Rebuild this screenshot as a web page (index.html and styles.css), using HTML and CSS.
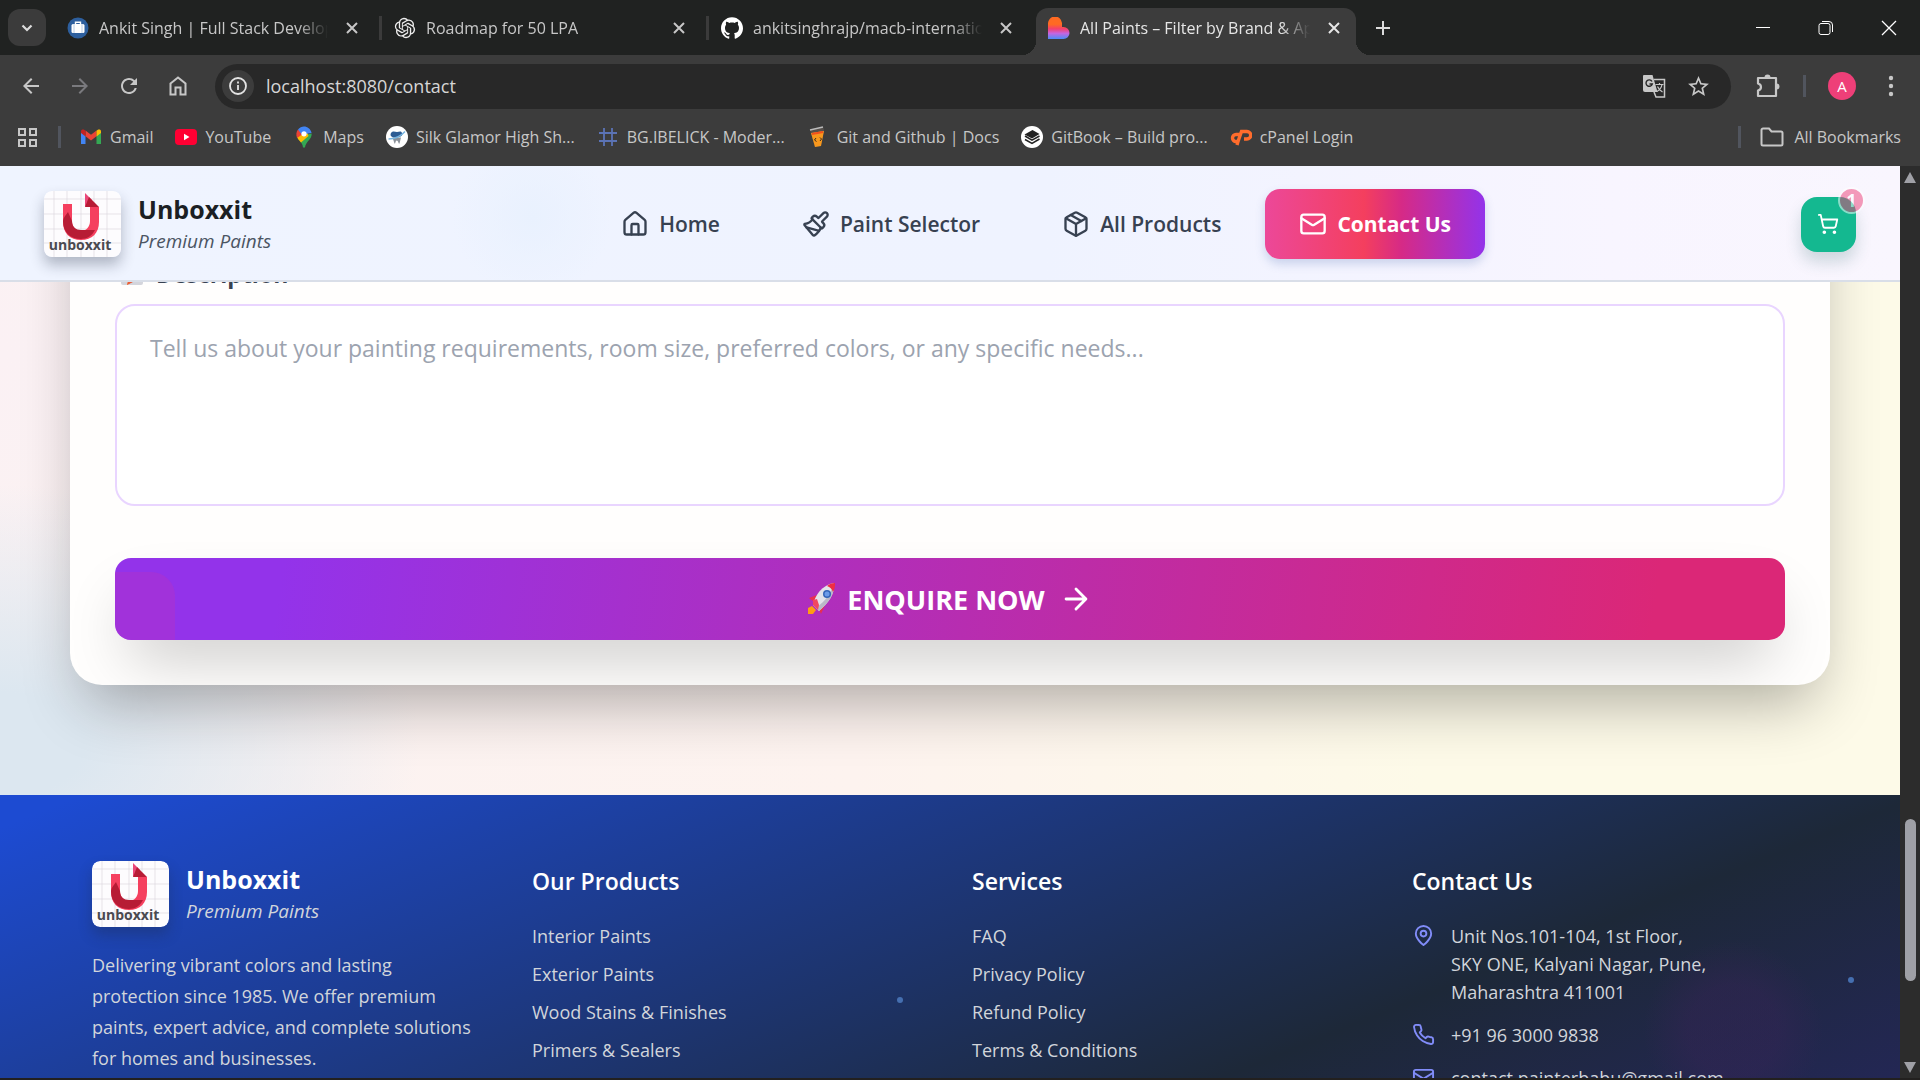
FILE: index.html
```html
<!DOCTYPE html>
<html lang="en">
<head>
  <meta charset="UTF-8" />
  <meta name="viewport" content="width=device-width, initial-scale=1.0" />
  <title>All Paints – Filter by Brand &amp; Application</title>
  <link rel="stylesheet" href="styles.css">
</head>
<body>
  <div class="tab-strip">
    <button class="tab-search" aria-label="Search tabs">
      <svg width="16" height="16" viewBox="0 0 16 16"><path d="M3.500 5.500 8 10l4.500-4.500" fill="none" stroke="currentColor" stroke-width="2.200"/></svg>
    </button>
    <div class="tab">
      <svg class="fav" viewBox="0 0 22 22"><circle cx="11" cy="11" r="10.500" fill="#2d5f9e"/><path d="M8.500 7V5.200h5V7" fill="none" stroke="#fff" stroke-width="1.400"/><rect x="4.500" y="7" width="13" height="9" rx="1.500" fill="#fff"/><path d="M7 7v9M15 7v9" stroke="#b8cce6"/></svg>
      <span class="tab-title">Ankit Singh | Full Stack Developer</span>
      <button class="tab-close" aria-label="Close tab"><svg width="14" height="14" viewBox="0 0 14 14"><path d="m2 2 10 10M12 2 2 12" stroke="currentColor" stroke-width="2"/></svg></button>
    </div>
    <div class="tab">
      <svg class="fav" viewBox="-1 -1 26 26"><path fill="#eee" d="M22.2819 9.8211a5.9847 5.9847 0 0 0-.5157-4.9108 6.0462 6.0462 0 0 0-6.5098-2.9A6.0651 6.0651 0 0 0 4.9807 4.1818a5.9847 5.9847 0 0 0-3.9977 2.9 6.0462 6.0462 0 0 0 .7427 7.0966 5.98 5.98 0 0 0 .511 4.9107 6.051 6.051 0 0 0 6.5146 2.9001A5.9847 5.9847 0 0 0 13.2599 24a6.0557 6.0557 0 0 0 5.7718-4.2058 5.9894 5.9894 0 0 0 3.9977-2.9001 6.0557 6.0557 0 0 0-.7475-7.0729zm-9.022 12.6081a4.4755 4.4755 0 0 1-2.8764-1.0408l.1419-.0804 4.7783-2.7582a.7948.7948 0 0 0 .3927-.6813v-6.7369l2.02 1.1686a.071.071 0 0 1 .038.052v5.5826a4.504 4.504 0 0 1-4.4945 4.4944zm-9.6607-4.1254a4.4708 4.4708 0 0 1-.5346-3.0137l.142.0852 4.783 2.7582a.7712.7712 0 0 0 .7806 0l5.8428-3.3685v2.3324a.0804.0804 0 0 1-.0332.0615L9.74 19.9502a4.4992 4.4992 0 0 1-6.1408-1.6464zM2.3408 7.8956a4.485 4.485 0 0 1 2.3655-1.9728V11.6a.7664.7664 0 0 0 .3879.6765l5.8144 3.3543-2.0201 1.1685a.0757.0757 0 0 1-.071 0l-4.8303-2.7865A4.504 4.504 0 0 1 2.3408 7.872zm16.5963 3.8558L13.1038 8.364 15.1192 7.2a.0757.0757 0 0 1 .071 0l4.8303 2.7913a4.4944 4.4944 0 0 1-.6765 8.1042v-5.6772a.79.79 0 0 0-.407-.667zm2.0107-3.0231l-.142-.0852-4.7735-2.7818a.7759.7759 0 0 0-.7854 0L9.409 9.2297V6.8974a.0662.0662 0 0 1 .0284-.0615l4.8303-2.7866a4.4992 4.4992 0 0 1 6.6802 4.66zM8.3065 12.863l-2.02-1.1638a.0804.0804 0 0 1-.038-.0567V6.0742a4.4992 4.4992 0 0 1 7.3757-3.4537l-.142.0805L8.704 5.459a.7948.7948 0 0 0-.3927.6813zm1.0976-2.3654l2.602-1.4998 2.6069 1.4998v2.9994l-2.5974 1.4997-2.6067-1.4997Z"/></svg>
      <span class="tab-title">Roadmap for 50 LPA</span>
      <button class="tab-close" aria-label="Close tab"><svg width="14" height="14" viewBox="0 0 14 14"><path d="m2 2 10 10M12 2 2 12" stroke="currentColor" stroke-width="2"/></svg></button>
    </div>
    <div class="tab tab-last">
      <svg class="fav" viewBox="0 0 24 24"><path fill="#fff" d="M12 .297c-6.63 0-12 5.373-12 12 0 5.303 3.438 9.8 8.205 11.385.6.113.82-.258.82-.577 0-.285-.01-1.04-.015-2.04-3.338.724-4.042-1.61-4.042-1.61C4.422 18.07 3.633 17.7 3.633 17.7c-1.087-.744.084-.729.084-.729 1.205.084 1.838 1.236 1.838 1.236 1.07 1.835 2.809 1.305 3.495.998.108-.776.417-1.305.76-1.605-2.665-.3-5.466-1.332-5.466-5.93 0-1.31.465-2.38 1.235-3.22-.135-.303-.54-1.523.105-3.176 0 0 1.005-.322 3.3 1.23.96-.267 1.98-.399 3-.405 1.02.006 2.04.138 3 .405 2.28-1.552 3.285-1.23 3.285-1.23.645 1.653.24 2.873.12 3.176.765.84 1.23 1.91 1.23 3.22 0 4.61-2.805 5.625-5.475 5.92.42.36.81 1.096.81 2.22 0 1.606-.015 2.896-.015 3.286 0 .315.21.69.825.57C20.565 22.092 24 17.592 24 12.297c0-6.627-5.373-12-12-12"/></svg>
      <span class="tab-title">ankitsinghrajp/macb-international</span>
      <button class="tab-close" aria-label="Close tab"><svg width="14" height="14" viewBox="0 0 14 14"><path d="m2 2 10 10M12 2 2 12" stroke="currentColor" stroke-width="2"/></svg></button>
    </div>
    <div class="tab tab-active">
      <svg class="fav" viewBox="0 0 22 22"><defs><linearGradient id="heart" x1="0" y1="0" x2="0" y2="1"><stop offset="0.350" stop-color="#ff6a22"/><stop offset="0.550" stop-color="#f43f6e"/><stop offset="0.750" stop-color="#c565e0"/><stop offset="1" stop-color="#4a8df8"/></linearGradient></defs><path fill="url(#heart)" d="M0 22V7a7 7 0 0 1 14-1v4h1.500a6 6 0 0 1 0 12z"/></svg>
      <span class="tab-title">All Paints – Filter by Brand &amp; Application</span>
      <button class="tab-close" aria-label="Close tab"><svg width="14" height="14" viewBox="0 0 14 14"><path d="m2 2 10 10M12 2 2 12" stroke="currentColor" stroke-width="2"/></svg></button>
    </div>
    <button class="new-tab" aria-label="New tab"><svg width="16" height="16" viewBox="0 0 16 16"><path d="M8 1v14M1 8h14" stroke="currentColor" stroke-width="2"/></svg></button>
    <div class="window-controls">
      <button aria-label="Minimize"><svg width="16" height="16" viewBox="0 0 16 16"><path d="M1 7.500h14" stroke="currentColor"/></svg></button>
      <button aria-label="Restore"><svg width="16" height="16" viewBox="0 0 16 16" fill="none" stroke="currentColor"><rect x="1" y="3.500" width="11" height="11" rx="2"/><path d="M4 1.500h7a3.500 3.500 0 0 1 3.500 3.500v7"/></svg></button>
      <button aria-label="Close"><svg width="16" height="16" viewBox="0 0 16 16"><path d="m1 1 14 14M15 1 1 15" stroke="currentColor" stroke-width="1.300"/></svg></button>
    </div>
  </div>

  <div class="toolbar">
    <button class="tool" aria-label="Back"><svg class="icon-24" viewBox="0 0 24 24"><path fill="currentColor" d="M20 11H7.830l5.590-5.590L12 4l-8 8 8 8 1.410-1.410L7.830 13H20z"/></svg></button>
    <button class="tool tool-off" aria-label="Forward"><svg class="icon-24" viewBox="0 0 24 24"><path fill="currentColor" d="M4 11h12.170l-5.590-5.590L12 4l8 8-8 8-1.410-1.410L16.170 13H4z"/></svg></button>
    <button class="tool" aria-label="Reload"><svg class="icon-24" viewBox="0 0 24 24"><path fill="currentColor" d="M17.650 6.350A7.958 7.958 0 0 0 12 4c-4.420 0-7.990 3.580-7.990 8s3.570 8 7.990 8c3.730 0 6.840-2.550 7.730-6h-2.080A5.990 5.990 0 0 1 12 18c-3.310 0-6-2.690-6-6s2.690-6 6-6c1.660 0 3.140.690 4.220 1.780L13 11h7V4z"/></svg></button>
    <button class="tool" aria-label="Home"><svg class="icon-24" viewBox="0 0 24 24"><path fill="none" stroke="currentColor" stroke-width="2" d="M4.500 9.500 12 3.500l7.500 6v11h-5v-7h-5v7h-5z"/></svg></button>
    <div class="address">
      <button class="site-info" aria-label="Site information"><svg width="20" height="20" viewBox="0 0 20 20"><circle cx="10" cy="10" r="8" fill="none" stroke="currentColor" stroke-width="1.800"/><path d="M10 9v5M10 5.500v2" stroke="currentColor" stroke-width="1.800"/></svg></button>
      <input type="text" class="url" aria-label="Address" value="localhost:8080/contact">
      <button class="tool-small" aria-label="Translate"><svg width="24" height="24" viewBox="0 0 24 24"><path fill="#c7c7c7" d="M2 1h8.500l5 17H3a2 2 0 0 1-2-2V2a1 1 0 0 1 1-1z"/><path fill="none" stroke="#c7c7c7" stroke-width="1.500" d="M12 5.500h10.500V23H14l-2-5"/><path d="M10 7.500A3.200 3.200 0 1 0 10.300 10H7.500" fill="none" stroke="#282828" stroke-width="1.400"/><path d="M13.500 10.500h8M17.500 9v1.500M20 10.500c-.500 3-2.500 5.500-5 7M15.500 12.500c1 2.500 2.500 4 5 5.500" fill="none" stroke="#c7c7c7" stroke-width="1.200"/></svg></button>
      <button class="tool-small" aria-label="Bookmark this tab"><svg width="25" height="25" viewBox="0 0 24 24"><path fill="#c7c7c7" d="M22 9.240l-7.190-.620L12 2 9.190 8.630 2 9.240l5.460 4.730L5.820 21 12 17.270 18.180 21l-1.630-7.030zM12 15.400l-3.760 2.270 1-4.280-3.320-2.880 4.380-.380L12 6.100l1.710 4.040 4.380.380-3.320 2.880 1 4.280z"/></svg></button>
    </div>
    <button class="tool-ext" aria-label="Extensions"><svg width="26" height="26" viewBox="0 0 26 26"><path fill="none" stroke="currentColor" stroke-width="2.200" stroke-linejoin="round" d="M3 5h18v18H3v-5.500c4-1 4-6 0-7z"/><path fill="currentColor" d="M9.500 4.500a3 3 0 0 1 6 0zM21.500 10.500a3 3 0 0 1 0 6z"/></svg></button>
    <span class="divider"></span>
    <button class="avatar" aria-label="Profile">A</button>
    <button class="tool-menu" aria-label="Menu"><svg width="6" height="22" viewBox="0 0 6 22"><g fill="currentColor"><circle cx="3" cy="3" r="2.200"/><circle cx="3" cy="11" r="2.200"/><circle cx="3" cy="19" r="2.200"/></g></svg></button>
  </div>

  <div class="bookmarks">
    <button class="apps" aria-label="Apps"><svg width="21" height="21" viewBox="0 0 21 21"><g fill="none" stroke="currentColor" stroke-width="2"><path d="M2 2h6v6H2zM13 2h6v6h-6zM2 13h6v6H2zM13 13h6v6h-6z"/></g></svg></button>
    <span class="divider"></span>
    <a href="#"><svg class="mark" viewBox="0 0 22 22"><path fill="#4285f4" d="M1 6v12h4.500V9.500z"/><path fill="#34a853" d="M21 6v12h-4.500V9.500z"/><path fill="#ea4335" d="M5.500 4.500 11 8.700l5.500-4.200v5.800L11 14.500l-5.500-4.200z"/><path fill="#c5221f" d="M1 7V5.500c0-2 2-2.500 3.500-1.500l1 .700v5.700z"/><path fill="#fbbc04" d="M21 7V5.500c0-2-2-2.500-3.500-1.500l-1 .700v5.700z"/></svg>Gmail</a>
    <a href="#"><svg class="mark" viewBox="0 0 22 22"><rect y="3" width="22" height="16" rx="4" fill="#ff0033"/><path fill="#fff" d="m9 7.800 5.500 3.200L9 14.200z"/></svg>YouTube</a>
    <a href="#"><svg class="mark" viewBox="0 0 22 22"><path fill="#34a853" d="M4 10.500c1.500 4 5.500 5.500 6 11h2c.500-6 7-8 6.700-14z"/><path fill="#fbbc04" d="M3.800 9.500 14 5l1.500 5-7.500 6.500C6 14 4 12.500 3.800 9.500z"/><path fill="#ea4335" d="M5 3.500 10 8l-6 4C3 8.500 3 6 5 3.500z"/><path fill="#4285f4" d="M5 3.500c4-5 12-3.500 13.600 3.500L12 8l-3 1z"/><circle cx="11" cy="7.800" r="2.600" fill="#fff"/></svg>Maps</a>
    <a href="#"><svg class="mark" viewBox="0 0 22 22"><circle cx="11" cy="11" r="11" fill="#fff"/><path fill="#2d5c94" d="M5 7c2-2.500 4-1 6-1s4-1.500 5 1-1 4-5.500 4.500S3.500 10 5 7z"/><path fill="#8b9199" d="M6.500 11.500h8.500l-1.500 6c-1 1-1.200-3-2.700-3s-1.300 4-2.300 3z"/><path d="M2.500 13C9 13 15 10 19 5.500" fill="none" stroke="#77b4df" stroke-width="1.500"/></svg>Silk Glamor High Sh...</a>
    <a href="#"><svg class="mark" viewBox="0 0 22 22"><path d="M7 2v18M15 2v18M2 7h18M2 15h18" stroke="#5b73b5" stroke-width="1.800"/></svg>BG.IBELICK - Moder...</a>
    <a href="#"><svg class="mark" viewBox="0 0 22 22"><path d="m3 4 13-3 1 3-3 16-6 1z" fill="#55504c"/><path d="m4 7 13-2-3 15-6 1z" fill="#f8981d"/><path d="m3 4 13-3" stroke="#bbb" stroke-width="1.500"/><path d="m5 8 11-2" stroke="#f4511e" stroke-width="2"/><path d="m9 12-1.500 2 2 1.500M13 11.500l1.500 1.500-1.500 2" fill="none" stroke="#3b2a1a"/></svg>Git and Github | Docs</a>
    <a href="#"><svg class="mark" viewBox="0 0 22 22"><circle cx="11" cy="11" r="11" fill="#fff"/><path fill="#222" d="m3.500 8.500 8-4.500 7 4-7.500 4.500z"/><path d="m4 10 7 4.200L18.500 10M4 13.500l7 4 7.500-4.500" fill="none" stroke="#222" stroke-width="1.500"/></svg>GitBook – Build pro...</a>
    <a href="#"><svg class="mark" viewBox="0 0 22 22"><path d="M9.500 8.500H6a3.500 3.500 0 0 0 0 7h2L11.500 5.500H17a3.700 3.700 0 0 1 0 7.500h-3M7 19l1-3.500" fill="none" stroke="#ff6c2c" stroke-width="3.400"/></svg>cPanel Login</a>
    <div class="all-bookmarks">
      <span class="divider"></span>
      <a href="#"><svg width="24" height="20" viewBox="0 0 24 20"><path d="M1.500 3a1.500 1.500 0 0 1 1.500-1.500h6l2.500 3H21A1.500 1.500 0 0 1 22.500 6v11a1.500 1.500 0 0 1-1.500 1.500H3A1.500 1.500 0 0 1 1.500 17z" fill="none" stroke="currentColor" stroke-width="2"/></svg>All Bookmarks</a>
    </div>
  </div>

  <div class="viewport">
    <div class="page">
      <header class="site-header">
        <a href="#" class="brand">
          <svg class="logo" viewBox="0 0 77 66">
            <rect width="77" height="66" rx="8" fill="#fdfcfe"/>
            <path d="M10 0v66M23 0v66M37 0v66M50 0v66M63 0v66M0 8h77M0 23h77M0 38h77M0 52h77" stroke="#ddd9df" stroke-width="0.700"/>
            <path fill="#f5405f" d="M19 13h9v17c0 6 4 10 9 10s9-4 9-10V16h9v15c0 11-7 18-18 18S19 42 19 31z"/>
            <path fill="#b71c35" d="M19 30c0-3 3-6 5-9l4 9c0 6 4 9 9 9h14c-3 6-8 9-14 9-11 0-18-7-18-18z"/>
            <path fill="#ea4778" d="m41 2 7 7-7 7z"/><path fill="#b71c35" d="m41 16 4-10 10 10z"/>
            <text class="logo-text" x="36" y="59">unboxxit</text>
          </svg>
          <span class="brand-text"><strong>Unboxxit</strong><em>Premium Paints</em></span>
        </a>
        <nav class="site-nav">
          <a href="#"><svg class="line-icon" viewBox="0 0 24 24"><path d="M15 21v-8a1 1 0 0 0-1-1h-4a1 1 0 0 0-1 1v8"/><path d="M3 10a2 2 0 0 1 .709-1.528l7-5.999a2 2 0 0 1 2.582 0l7 5.999A2 2 0 0 1 21 10v9a2 2 0 0 1-2 2H5a2 2 0 0 1-2-2z"/></svg>Home</a>
          <a href="#"><svg class="line-icon" viewBox="0 0 24 24"><path d="m14.622 17.897-10.680-2.913"/><path d="M18.376 2.622a1 1 0 1 1 3.002 3.002L17.360 9.643a.5.5 0 0 0 0 .707l.944.944a2.410 2.410 0 0 1 0 3.408l-.944.944a.5.5 0 0 1-.707 0L8.354 7.348a.5.5 0 0 1 0-.707l.944-.944a2.410 2.410 0 0 1 3.408 0l.944.944a.5.5 0 0 0 .707 0z"/><path d="M9 8c-1.804 2.710-3.970 3.460-6.583 3.948a.507.507 0 0 0-.302.819l7.320 8.883a1 1 0 0 0 1.185.204C12.735 20.405 16 16.792 16 15"/></svg>Paint Selector</a>
          <a href="#"><svg class="line-icon" viewBox="0 0 24 24"><path d="m7.500 4.270 9 5.150"/><path d="M21 8a2 2 0 0 0-1-1.730l-7-4a2 2 0 0 0-2 0l-7 4A2 2 0 0 0 3 8v8a2 2 0 0 0 1 1.730l7 4a2 2 0 0 0 2 0l7-4A2 2 0 0 0 21 16Z"/><path d="m3.300 7 8.700 5 8.700-5M12 22V12"/></svg>All Products</a>
          <a href="#" class="current"><svg class="line-icon" viewBox="0 0 24 24"><rect x="2" y="4" width="20" height="16" rx="2"/><path d="m22 7-8.970 5.700a1.940 1.940 0 0 1-2.060 0L2 7"/></svg>Contact Us</a>
        </nav>
        <button class="cart" aria-label="Cart">
          <svg class="cart-icon" viewBox="0 0 24 24"><circle cx="8" cy="21" r="1"/><circle cx="19" cy="21" r="1"/><path d="M2.050 2.050h2l2.660 12.420a2 2 0 0 0 2 1.580h9.780a2 2 0 0 0 1.950-1.570l1.650-7.430H5.120"/></svg>
          <span class="cart-count">1</span>
        </button>
      </header>

      <main class="contact">
        <form class="contact-card">
          <label for="description"><svg width="24" height="24" viewBox="0 0 24 24"><rect x="1" y="1" width="22" height="22" rx="2" fill="#d4d5dc"/><path d="M5 6h13M5 10h10" stroke="#8990a5"/><path d="m7 23 2-7L18 5l4 4-10 11z" fill="#ff9d26"/><path d="m7 23 2-7 4 4z" fill="#e85b3b"/></svg>Description</label>
          <textarea id="description" placeholder="Tell us about your painting requirements, room size, preferred colors, or any specific needs..."></textarea>
          <button type="submit" class="enquire">
            <svg width="30" height="34" viewBox="0 0 30 34"><path fill="#e8304f" d="m2 16 8-3 8 10-4 9-3-7-5-6z"/><path fill="#ff9d13" d="M1 32v-6l4-2 4 4-3 4z"/><path fill="#e3e3ea" d="M6 23C8 13 15 3 27 1c1 12-6 20-15 28z"/><path fill="#b9b9c7" d="M12 29 9 26C18 19 24 12 27 1c1 12-6 20-15 28z"/><path fill="#ef2d45" d="M20 4c2-2 5-3 8-3 0 3 0 6-2 9-1-3-3-5-6-6z"/><circle cx="20" cy="12" r="4" fill="#3565b8"/><circle cx="20" cy="12" r="2.500" fill="#6b9be8"/><path fill="#f04860" d="m6 18 4-1 2 6-1 5-5-5z"/></svg>
            ENQUIRE NOW
            <svg class="line-icon arrow" viewBox="0 0 24 24"><path d="M5 12h14M12 5l7 7-7 7"/></svg>
          </button>
        </form>
      </main>

      <footer class="site-footer">
        <span class="spark spark-left"></span>
        <span class="spark spark-right"></span>
        <div class="footer-col">
          <a href="#" class="brand">
            <svg class="logo" viewBox="0 0 77 66">
              <rect width="77" height="66" rx="8" fill="#fdfcfe"/>
              <path d="M10 0v66M23 0v66M37 0v66M50 0v66M63 0v66M0 8h77M0 23h77M0 38h77M0 52h77" stroke="#ddd9df" stroke-width="0.700"/>
              <path fill="#f5405f" d="M19 13h9v17c0 6 4 10 9 10s9-4 9-10V16h9v15c0 11-7 18-18 18S19 42 19 31z"/>
              <path fill="#b71c35" d="M19 30c0-3 3-6 5-9l4 9c0 6 4 9 9 9h14c-3 6-8 9-14 9-11 0-18-7-18-18z"/>
              <path fill="#ea4778" d="m41 2 7 7-7 7z"/><path fill="#b71c35" d="m41 16 4-10 10 10z"/>
              <text class="logo-text" x="36" y="59">unboxxit</text>
            </svg>
            <span class="brand-text"><strong>Unboxxit</strong><em>Premium Paints</em></span>
          </a>
          <p>Delivering vibrant colors and lasting protection since 1985. We offer premium paints, expert advice, and complete solutions for homes and businesses.</p>
        </div>
        <div class="footer-col">
          <h3>Our Products</h3>
          <ul>
            <li><a href="#">Interior Paints</a></li>
            <li><a href="#">Exterior Paints</a></li>
            <li><a href="#">Wood Stains &amp; Finishes</a></li>
            <li><a href="#">Primers &amp; Sealers</a></li>
          </ul>
        </div>
        <div class="footer-col">
          <h3>Services</h3>
          <ul>
            <li><a href="#">FAQ</a></li>
            <li><a href="#">Privacy Policy</a></li>
            <li><a href="#">Refund Policy</a></li>
            <li><a href="#">Terms &amp; Conditions</a></li>
          </ul>
        </div>
        <div class="footer-col">
          <h3>Contact Us</h3>
          <address>
            <div class="contact-row"><svg class="line-icon" viewBox="0 0 24 24"><path d="M20 10c0 6-8 12-8 12s-8-6-8-12a8 8 0 0 1 16 0Z"/><circle cx="12" cy="10" r="3"/></svg><span>Unit Nos.101-104, 1st Floor,<br>SKY ONE, Kalyani Nagar, Pune,<br>Maharashtra 411001</span></div>
            <div class="contact-row"><svg class="line-icon" viewBox="0 0 24 24"><path d="M22 16.920v3a2 2 0 0 1-2.180 2 19.790 19.790 0 0 1-8.630-3.070 19.500 19.500 0 0 1-6-6 19.790 19.790 0 0 1-3.070-8.670A2 2 0 0 1 4.110 2h3a2 2 0 0 1 2 1.720 12.840 12.840 0 0 0 .700 2.810 2 2 0 0 1-.450 2.110L8.090 9.910a16 16 0 0 0 6 6l1.270-1.270a2 2 0 0 1 2.110-.450 12.840 12.840 0 0 0 2.810.700A2 2 0 0 1 22 16.920z"/></svg><span>+91 96 3000 9838</span></div>
            <div class="contact-row"><svg class="line-icon" viewBox="0 0 24 24"><rect x="2" y="4" width="20" height="16" rx="2"/><path d="m22 7-8.970 5.700a1.940 1.940 0 0 1-2.060 0L2 7"/></svg><span>contact.painterbabu@gmail.com</span></div>
          </address>
        </div>
      </footer>
    </div>
    <div class="scrollbar">
      <span class="scroll-arrow"></span>
      <span class="scroll-before"></span>
      <span class="scroll-thumb"></span>
      <span class="scroll-after"></span>
      <span class="scroll-arrow scroll-down"></span>
    </div>
  </div>
</body>
</html>
```
FILE: styles.css
```css
* {
  box-sizing: border-box;
}
body {
  margin: 0;
  height: 100vh;
  display: flex;
  flex-direction: column;
  overflow: hidden;
  background: #3c3c3c;
  border-bottom: 2px solid #22201f;
  font-family: 'Open Sans', 'Noto Sans', sans-serif;
}
button, input, textarea {
  font-family: inherit;
}
button {
  display: flex;
  align-items: center;
  justify-content: center;
  padding: 0;
  border: none;
  background: none;
  color: inherit;
  cursor: pointer;
}
a {
  color: inherit;
  text-decoration: none;
}
svg {
  display: block;
  flex: none;
}

/* tab strip */
.tab-strip, .bookmarks {
  font-size: 16px;
}
.tab-strip {
  flex: none;
  display: flex;
  align-items: center;
  height: 55px;
  padding-left: 8px;
  background: #202221;
  color: #dcdcdc;
}
.tab-search {
  width: 38px;
  height: 37px;
  margin-right: 9px;
  border-radius: 12px;
  background: #3b3b3b;
}
.tab {
  display: flex;
  align-items: center;
  width: 327px;
  height: 24px;
  padding: 0 20px 0 12px;
  border-right: 3px solid #3b3b3b;
  color: #c7c7c7;
}
.tab-last {
  border-color: transparent;
}
.fav {
  width: 22px;
  height: 22px;
  margin-right: 10px;
}
.tab-title {
  flex: 1;
  overflow: hidden;
  white-space: nowrap;
  -webkit-mask-image: linear-gradient(to left, transparent, #000 30px);
  mask-image: linear-gradient(to left, transparent, #000 30px);
}
.tab-close {
  width: 14px;
  margin-left: 17px;
}
.tab-active {
  position: relative;
  align-self: flex-end;
  width: 320px;
  height: 47px;
  padding: 0 15px 8px 12px;
  border: none;
  border-radius: 12px 12px 0 0;
  background: #3c3c3c;
  color: #e6e6e6;
}
/* flared feet of the open tab */
.tab-active::before, .tab-active::after {
  content: "";
  position: absolute;
  bottom: 0;
  width: 14px;
  height: 14px;
}
.tab-active::before {
  right: 100%;
  background: radial-gradient(circle at 0 0, transparent 14px, #3c3c3c 14px);
}
.tab-active::after {
  left: 100%;
  background: radial-gradient(circle at 100% 0, transparent 14px, #3c3c3c 14px);
}
.new-tab {
  width: 54px;
  height: 40px;
}
.window-controls {
  display: flex;
  margin-left: auto;
  color: #fff;
}
.window-controls button {
  width: 63px;
  height: 54px;
}

/* toolbar */
.toolbar {
  flex: none;
  display: flex;
  align-items: center;
  height: 62px;
  padding: 0 22px 0 6px;
  color: #c7c7c7;
}
.tool {
  width: 49px;
  height: 40px;
}
.tool-off {
  color: #7a7a7e;
}
.icon-24 {
  width: 24px;
  height: 24px;
}
.address {
  flex: 1;
  display: flex;
  align-items: center;
  height: 45px;
  margin: 0 24px 0 13px;
  padding: 0 20px 0 7px;
  border-radius: 23px;
  background: #282828;
}
.site-info {
  width: 32px;
  height: 32px;
  border-radius: 50%;
  background: #3c3c3c;
  color: #e3e3e3;
}
.url {
  flex: 1;
  min-width: 0;
  padding: 0 12px;
  border: none;
  outline: none;
  background: none;
  color: #d6d6d6;
  font-size: 18px;
}
.tool-small {
  width: 25px;
  margin-left: 20px;
}
.divider {
  width: 3px;
  height: 22px;
  background: #51555e;
}
.toolbar .divider {
  margin: 0 22px;
}
.avatar {
  width: 28px;
  height: 28px;
  border-radius: 50%;
  background: #ee3f78;
  color: #fff;
  font-size: 15px;
}
.tool-menu {
  width: 14px;
  margin-left: 28px;
}

/* bookmarks bar */
.bookmarks {
  flex: none;
  display: flex;
  align-items: center;
  height: 49px;
  padding: 0 19px 9px 17px;
  color: #c7c7c7;
  line-height: 20px;
  white-space: nowrap;
}
.bookmarks .divider {
  margin: 0 19px 0 20px;
}
.bookmarks > a {
  display: flex;
  align-items: center;
  margin-right: 22px;
}
.mark {
  width: 22px;
  height: 22px;
  margin-right: 8px;
}
.all-bookmarks {
  display: flex;
  align-items: center;
  margin-left: auto;
}
.all-bookmarks a {
  display: flex;
  align-items: center;
  gap: 10px;
}

/* page */
.viewport {
  flex: 1;
  min-height: 0;
  display: flex;
}
.page {
  position: relative;
  flex: 1;
  display: flex;
  flex-direction: column;
  overflow: hidden;
  background: #fff;
}
.scrollbar {
  width: 20px;
  display: flex;
  flex-direction: column;
  align-items: center;
  padding: 6px 0 5px;
  background: #2c2c2c;
}
.scroll-arrow {
  border: 6px solid transparent;
  border-top: none;
  border-bottom: 11px solid #9fa0a6;
}
.scroll-down {
  border-top: 11px solid #9fa0a6;
  border-bottom: none;
}
.scroll-before {
  flex: 635;
}
.scroll-thumb {
  flex: 162;
  width: 11px;
  border-radius: 6px;
  background: #9fa0a6;
}
.scroll-after {
  flex: 81;
}

.site-header {
  position: absolute;
  top: 0;
  left: 0;
  right: 0;
  z-index: 2;
  display: flex;
  align-items: center;
  justify-content: space-between;
  height: 116px;
  padding: 2px 44px 0;
  border-bottom: 2px solid #d9dee8;
  background: radial-gradient(circle at 28% 45%, #e9f1fe, transparent 80px), linear-gradient(90deg, #eff4ff, #eff3ff 55%, #f8f5ff 85%, #f9f6fe);
}
.brand {
  display: flex;
  align-items: center;
  gap: 17px;
}
.logo {
  width: 77px;
  height: 66px;
  border-radius: 8px;
  box-shadow: 0 8px 14px rgba(30, 40, 60, 0.3);
}
.logo-text {
  fill: #4a4a50;
  font-size: 14px;
  font-weight: 700;
  text-anchor: middle;
}
.brand-text {
  display: flex;
  flex-direction: column;
  padding-top: 2px;
  color: #4b5563;
  font-size: 19px;
  line-height: 32px;
}
.brand-text strong {
  color: #1b1f24;
  font-size: 25px;
}
.site-nav {
  display: flex;
  gap: 14px;
  color: #374151;
  font-size: 21px;
  font-weight: 600;
}
.site-nav a {
  display: flex;
  align-items: center;
  gap: 10px;
  height: 70px;
  padding: 0 34px;
}
.line-icon {
  width: 28px;
  height: 28px;
  fill: none;
  stroke: currentColor;
  stroke-width: 2;
  stroke-linecap: round;
  stroke-linejoin: round;
}
.site-nav .current {
  margin-left: -4px;
  border-radius: 15px;
  background: linear-gradient(90deg, #ec4899, #f43f5e 45%, #d62a86 62%, #9333ea);
  box-shadow: 0 5px 10px rgba(80, 110, 180, 0.25);
  color: #fff;
  font-weight: 700;
}
.cart {
  position: relative;
  width: 55px;
  height: 55px;
  border-radius: 16px;
  background: #14b890;
  box-shadow: 0 10px 16px rgba(30, 90, 90, 0.2);
  color: #fff;
}
.cart-icon {
  width: 22px;
  height: 22px;
  fill: none;
  stroke: currentColor;
  stroke-width: 2;
  stroke-linecap: round;
  stroke-linejoin: round;
}
.cart-count {
  position: absolute;
  top: -10px;
  right: -9px;
  width: 27px;
  height: 27px;
  border: 2px solid #fff;
  border-radius: 50%;
  background: #ee3f78;
  font-size: 18px;
  font-weight: 700;
  line-height: 23px;
  opacity: 0.5;
}

.contact {
  padding: 0 70px 110px;
  background:
    radial-gradient(ellipse 420px 260px at 0 92%, #dce7f0 20%, transparent),
    radial-gradient(ellipse 500px 300px at 0 30%, #fbf1f4, transparent),
    linear-gradient(90deg, #fbf2f2, #fdf3ef 45%, #fdfae8 75%);
}
.contact-card {
  display: flex;
  flex-direction: column;
  padding: 92px 45px 45px;
  border-radius: 0 0 32px 32px;
  background: #fffefd;
  box-shadow: 0 31px 62px -15px rgba(0, 0, 0, 0.32);
  overflow: hidden;
}
.contact-card label {
  display: flex;
  align-items: center;
  gap: 12px;
  height: 32px;
  margin: 0 0 14px 5px;
  color: #374151;
  font-size: 23px;
  font-weight: 700;
}
.contact-card textarea {
  height: 202px;
  padding: 26px 33px;
  border: 2px solid #e9d5ff;
  border-radius: 20px;
  outline: none;
  resize: none;
  background: #fff;
  color: #374151;
  font-size: 23px;
  line-height: 32px;
}
.contact-card textarea::placeholder {
  color: #9ca3af;
}
.enquire {
  position: relative;
  height: 82px;
  margin-top: 52px;
  gap: 10px;
  border-radius: 16px;
  background: linear-gradient(98deg, #9333ea 10%, #db2777 92%);
  box-shadow: 0 31px 62px -15px rgba(0, 0, 0, 0.23);
  color: #fff;
  font-size: 27px;
  font-weight: 700;
}
.enquire::before {
  content: "";
  position: absolute;
  left: 0;
  bottom: 0;
  width: 60px;
  height: 68px;
  border-radius: 0 24px 0 16px;
  background: rgba(190, 50, 190, 0.35);
}
.enquire .arrow {
  width: 34px;
  height: 34px;
  margin-left: 4px;
}

/* footer */
.site-footer {
  position: relative;
  flex: 1;
  min-height: 0;
  display: grid;
  grid-template-columns: repeat(4, 1fr);
  gap: 44px;
  padding: 66px 92px 0;
  overflow: hidden;
  background:
    radial-gradient(circle at 1733px 235px, rgba(60, 35, 90, 0.35) 45px, transparent 90px),
    linear-gradient(158deg, #1d4bd2 30px, #1d2838 720px, #232754 974px);
  color: #d1d5db;
  font-size: 18px;
}
.footer-col p {
  margin: 23px 0 0;
  padding-right: 10px;
  line-height: 31px;
}
.footer-col h3 {
  margin: 4px 0 25px;
  color: #fff;
  font-size: 23px;
  font-weight: 600;
  line-height: 32px;
}
.footer-col ul {
  display: flex;
  flex-direction: column;
  gap: 10px;
  margin: 0;
  padding: 0;
  list-style: none;
}
.footer-col li, .contact-row {
  line-height: 28px;
}
.site-footer .brand-text {
  color: #d1d5db;
}
.site-footer .brand-text strong {
  color: #fff;
}
.footer-col address {
  display: flex;
  flex-direction: column;
  gap: 15px;
  font-style: normal;
}
.contact-row {
  display: flex;
  gap: 16px;
}
.contact-row .line-icon {
  width: 23px;
  height: 23px;
  margin-top: 2px;
  color: #818cf8;
}
.spark {
  position: absolute;
  width: 6px;
  height: 6px;
  border-radius: 50%;
  background: #456fb0;
}
.spark-left {
  top: 202px;
  left: 897px;
}
.spark-right {
  top: 182px;
  left: 1848px;
}
```
